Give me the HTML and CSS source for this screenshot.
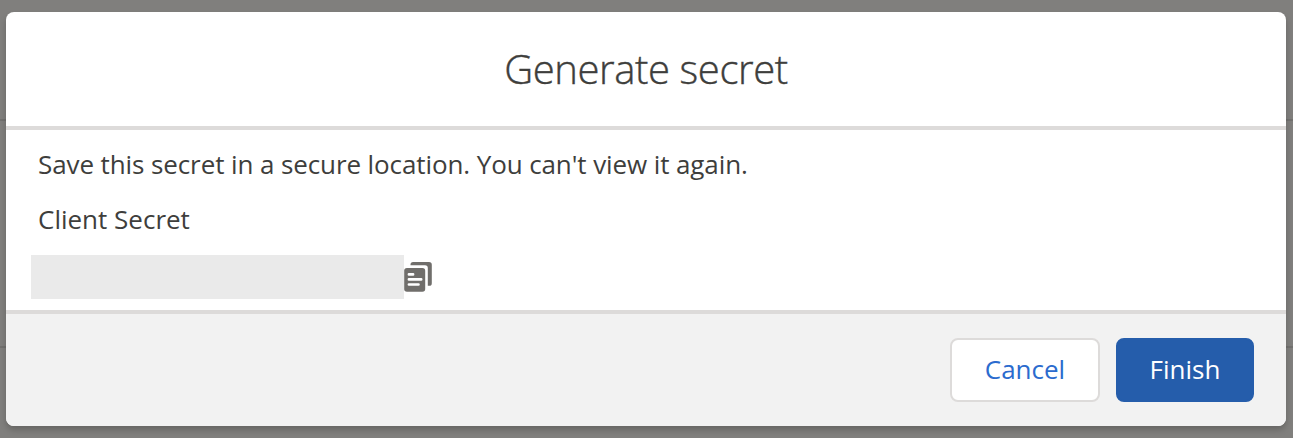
FILE: index.html
```html
<!DOCTYPE html>
<html lang="en">
<head>
<meta charset="utf-8">
<title>Generate secret</title>
<link rel="stylesheet" href="styles.css">
</head>
<body>
<div class="backdrop">
  <section class="modal" role="dialog" aria-labelledby="title">
    <header class="modal-header"><h2 class="modal-title" id="title">Generate secret</h2></header>
    <div class="modal-body">
      <p class="message">Save this secret in a secure location. You can't view it again.</p>
      <p class="label">Client Secret</p>
      <div class="secret-row">
        <div class="secret-value"></div>
        <svg class="copy-icon" width="28" height="30" viewBox="0 0 28 30" aria-hidden="true">
          <path d="M6.5 3.2V2.6A2.6 2.6 0 0 1 9.1 0H25a2.8 2.8 0 0 1 2.8 2.8v18.4a2.6 2.6 0 0 1-2.6 2.6h-1.4V6a2.8 2.8 0 0 0-2.8-2.8z" fill="#706e6b"/>
          <rect x="0.2" y="6" width="21" height="23.8" rx="2.8" fill="#706e6b"/>
          <path d="M4.9 12.4h4.2M4.9 17.4h12.3M4.9 22.5h9.6" fill="none" stroke="#fff" stroke-width="2.6" stroke-linecap="round"/>
        </svg>
      </div>
    </div>
    <footer class="modal-footer">
      <button class="button button-neutral">Cancel</button>
      <button class="button button-brand">Finish</button>
    </footer>
  </section>
</div>
</body>
</html>
```
FILE: styles.css
```css
* { box-sizing: border-box; }
body {
  margin: 0;
  font-family: "Open Sans", "Noto Sans", sans-serif;
  font-size: 26px;
  color: #3e3e3c;
}
.backdrop {
  width: 1293px;
  height: 438px;
  padding: 12px 7px 12px 6px;
  overflow: hidden;
  background:
    linear-gradient(#72716f, #72716f) 0 119px / 100% 2px no-repeat,
    linear-gradient(#72716f, #72716f) 0 346px / 100% 2px no-repeat,
    #807f7d;
}
.modal {
  display: flex;
  flex-direction: column;
  height: 414px;
  border-radius: 8px;
  background: #fff;
  overflow: hidden;
  box-shadow: 0 4px 6px rgba(0, 0, 0, 0.2);
}
.modal-header {
  display: flex;
  justify-content: center;
  height: 118px;
  padding-top: 32px;
  border-bottom: 4px solid #dddbda;
}
.modal-title {
  margin: 0;
  font-size: 40px;
  font-weight: 300;
  line-height: 50px;
  letter-spacing: -0.4px;
  white-space: nowrap;
  -webkit-text-stroke: 0.4px currentColor;
}
.modal-body {
  height: 180px;
  padding: 16px 32px 0;
}
.message, .label {
  margin: 0;
  height: 36px;
  line-height: 36px;
  white-space: nowrap;
}
.message { letter-spacing: -0.1px; }
.label { margin-top: 19px; }
.secret-row {
  display: flex;
  align-items: center;
  margin: 18px 0 0 -7px;
}
.secret-value {
  width: 373px;
  height: 44px;
  background: #eaeaea;
}
.modal-footer {
  display: flex;
  justify-content: flex-end;
  gap: 16px;
  height: 116px;
  padding: 24px 32px;
  border-top: 4px solid #dddbda;
  background: #f2f2f2;
}
.button {
  height: 64px;
  padding: 0 0 2px;
  border: 2px solid;
  border-radius: 8px;
  font: inherit;
  line-height: 58px;
}
.button-neutral {
  width: 150px;
  border-color: #dddbda;
  background: #fff;
  color: #2b6bce;
}
.button-brand {
  width: 138px;
  border-color: #255dab;
  background: #255dab;
  color: #fff;
}
```
